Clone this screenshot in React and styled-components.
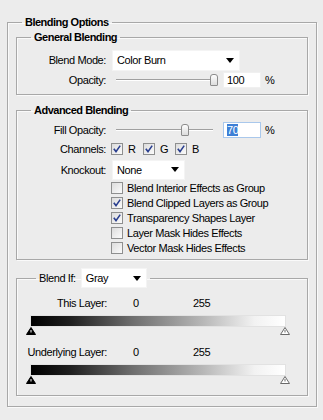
import styled, { createGlobalStyle } from "styled-components";

const Global = createGlobalStyle`
  html, body {
    margin: 0;
    padding: 0;
    background: #ececec;
  }
  body {
    font-family: Tahoma, "Liberation Sans", Arial, sans-serif;
    font-size: 11px;
    letter-spacing: -0.4px;
    color: #000;
  }
`;

const Panel = styled.div`
  width: 323px;
  height: 420px;
  box-sizing: border-box;
  padding: 15px 6px 0 7px;
  background: #ececec;
`;

const Group = styled.fieldset`
  margin: ${(p) => p.$mt || 0}px 0 0 0;
  padding: ${(p) => p.$pad || "0"};
  min-inline-size: 0;
  border: 1px solid #a8a8a8;
  box-shadow: inset 1px 1px 0 #fafafa, 1px 1px 0 #fafafa;
`;

const Legend = styled.legend`
  margin-left: ${(p) => p.$ml || 14}px;
  padding: 0 3px;
  height: 14px;
  line-height: 14px;
  font-weight: bold;
  font-size: 11px;
  letter-spacing: -0.5px;
`;

const InnerGroups = styled.div`
  padding: 1px 8px 10px 8px;
`;

const Row = styled.div`
  display: grid;
  grid-template-columns: 89px 1fr;
  column-gap: 6px;
  align-items: center;
  height: ${(p) => p.$h || 20}px;
`;

const Label = styled.span`
  text-align: right;
  white-space: nowrap;
`;

const Controls = styled.div`
  display: flex;
  align-items: center;
`;

const Select = styled.div`
  display: flex;
  align-items: center;
  justify-content: space-between;
  box-sizing: border-box;
  width: ${(p) => p.$w}px;
  height: ${(p) => p.$h || 21}px;
  padding: 0 5px 0 4px;
  background: #fff;
  border: 1px solid #f4f4f4;
`;

const Arrow = styled.span`
  width: 0;
  height: 0;
  border-left: 4.5px solid transparent;
  border-right: 4.5px solid transparent;
  border-top: 5px solid #000;
`;

const Track = styled.div`
  position: relative;
  width: 97px;
  height: 14px;
  margin-left: 4px;
  &::before {
    content: "";
    position: absolute;
    left: 0;
    right: 0;
    top: 6px;
    height: 1px;
    background: #a0a0a0;
    box-shadow: 0 1px 0 #fff;
  }
`;

const Thumb = styled.span`
  position: absolute;
  top: 1px;
  width: 6px;
  height: 10px;
  margin-left: -3px;
  border: 1px solid #8c8c8c;
  border-radius: 3px 3px 1px 1px;
  background: linear-gradient(#fdfdfd, #dcdcdc);
`;

const NumInput = styled.div`
  box-sizing: border-box;
  width: 38px;
  height: 16px;
  margin-left: 10px;
  padding: 0 3px;
  line-height: 14px;
  background: #fff;
  border: 1px solid ${(p) => (p.$focus ? "#a9c8ec" : "#f0f0f0")};
`;

const Selected = styled.span`
  background: #3d7fd6;
  color: #fff;
`;

const Percent = styled.span`
  margin-left: 4px;
`;

const Box = styled.span`
  display: inline-flex;
  align-items: center;
  justify-content: center;
  box-sizing: border-box;
  width: 12px;
  height: 12px;
  border: 1px solid #8e8f8f;
  background: linear-gradient(135deg, #dcdcdc, #fbfbfb);
  flex: none;
`;

const Check = ({ on }) => (
  <Box>
    {on && (
      <svg width="8" height="8" viewBox="0 0 8 8">
        <path d="M0.8 3.8 L3 6.6 L7.2 0.6" fill="none" stroke="#2a3f8f" strokeWidth="1.6" />
      </svg>
    )}
  </Box>
);

const Channel = styled.span`
  display: inline-flex;
  align-items: center;
  gap: 5px;
  width: 33px;
  margin-left: -1px;
`;

const CheckRow = styled.div`
  display: flex;
  align-items: center;
  gap: 4px;
  height: 15px;
  margin-left: 94px;
`;

const LayerRow = styled.div`
  display: grid;
  grid-template-columns: 90px 86px auto;
  align-items: center;
  height: 14px;
  margin-top: ${(p) => p.$mt}px;
`;

const Value = styled.span`
  padding-left: ${(p) => p.$pl || 0}px;
`;

const Bar = styled.div`
  width: 254px;
  height: 10px;
  margin: 6px 0 0 14px;
  background: linear-gradient(90deg, #000 0%, #1e1e1e 15%, #6e6e6e 40%, #b8b8b8 68%, #f2f2f2 88%, #fff 100%);
  box-shadow: 0 0 0 1px #e2e2e2;
`;

const ThumbLane = styled.div`
  position: relative;
  width: 254px;
  height: 9px;
  margin: 1px 0 0 14px;
`;

const Marker = styled.svg`
  position: absolute;
  top: 0;
  margin-left: -5px;
`;

const Pointer = ({ left, dark }) => (
  <Marker width="10" height="8" viewBox="0 0 10 8" style={{ left }}>
    <path
      d="M5 0.5 L9.5 7.5 L0.5 7.5 Z"
      fill={dark ? "#000" : "#fff"}
      stroke={dark ? "#000" : "#6a6a6a"}
      strokeWidth="1"
    />
    <path d="M5 3 L5 5.5" stroke={dark ? "#fff" : "#6a6a6a"} strokeWidth="1" />
  </Marker>
);

const LayerSlider = ({ label, mt }) => (
  <>
    <LayerRow $mt={mt}>
      <Label>{label}</Label>
      <Value $pl={26}>0</Value>
      <Value>255</Value>
    </LayerRow>
    <Bar />
    <ThumbLane>
      <Pointer left="0%" dark />
      <Pointer left="100%" />
    </ThumbLane>
  </>
);

const BlendIfLegend = styled.legend`
  margin-left: 19px;
  padding: 0 3px;
  display: flex;
  align-items: center;
  gap: 5px;
`;

export default function App() {
  return (
    <Panel>
      <Global />
      <Group>
        <Legend $ml={14}>Blending Options</Legend>
        <InnerGroups>
          <Group $pad="5px 0 5px 0">
            <Legend $ml={14}>General Blending</Legend>
            <Row $h={22}>
              <Label>Blend Mode:</Label>
              <Controls>
                <Select $w={128}>
                  Color Burn
                  <Arrow />
                </Select>
              </Controls>
            </Row>
            <Row $h={18}>
              <Label>Opacity:</Label>
              <Controls>
                <Track>
                  <Thumb style={{ left: "100%" }} />
                </Track>
                <NumInput>100</NumInput>
                <Percent>%</Percent>
              </Controls>
            </Row>
          </Group>

          <Group $mt={8} $pad="3px 0 4px 0">
            <Legend $ml={14}>Advanced Blending</Legend>
            <Row $h={19}>
              <Label>Fill Opacity:</Label>
              <Controls>
                <Track>
                  <Thumb style={{ left: "70%" }} />
                </Track>
                <NumInput $focus>
                  <Selected>70</Selected>
                </NumInput>
                <Percent>%</Percent>
              </Controls>
            </Row>
            <Row $h={20}>
              <Label>Channels:</Label>
              <Controls>
                <Channel>
                  <Check on />R
                </Channel>
                <Channel>
                  <Check on />G
                </Channel>
                <Channel>
                  <Check on />B
                </Channel>
              </Controls>
            </Row>
            <Row $h={21}>
              <Label>Knockout:</Label>
              <Controls>
                <Select $w={73} $h={20}>
                  None
                  <Arrow />
                </Select>
              </Controls>
            </Row>
            <CheckRow>
              <Check />
              Blend Interior Effects as Group
            </CheckRow>
            <CheckRow>
              <Check on />
              Blend Clipped Layers as Group
            </CheckRow>
            <CheckRow>
              <Check on />
              Transparency Shapes Layer
            </CheckRow>
            <CheckRow>
              <Check />
              Layer Mask Hides Effects
            </CheckRow>
            <CheckRow>
              <Check />
              Vector Mask Hides Effects
            </CheckRow>
          </Group>

          <Group $mt={8} $pad="0 0 10px 0">
            <BlendIfLegend>
              Blend If:
              <Select $w={66} $h={20}>
                Gray
                <Arrow />
              </Select>
            </BlendIfLegend>
            <LayerSlider label="This Layer:" mt={8} />
            <LayerSlider label="Underlying Layer:" mt={9} />
          </Group>
        </InnerGroups>
      </Group>
    </Panel>
  );
}
